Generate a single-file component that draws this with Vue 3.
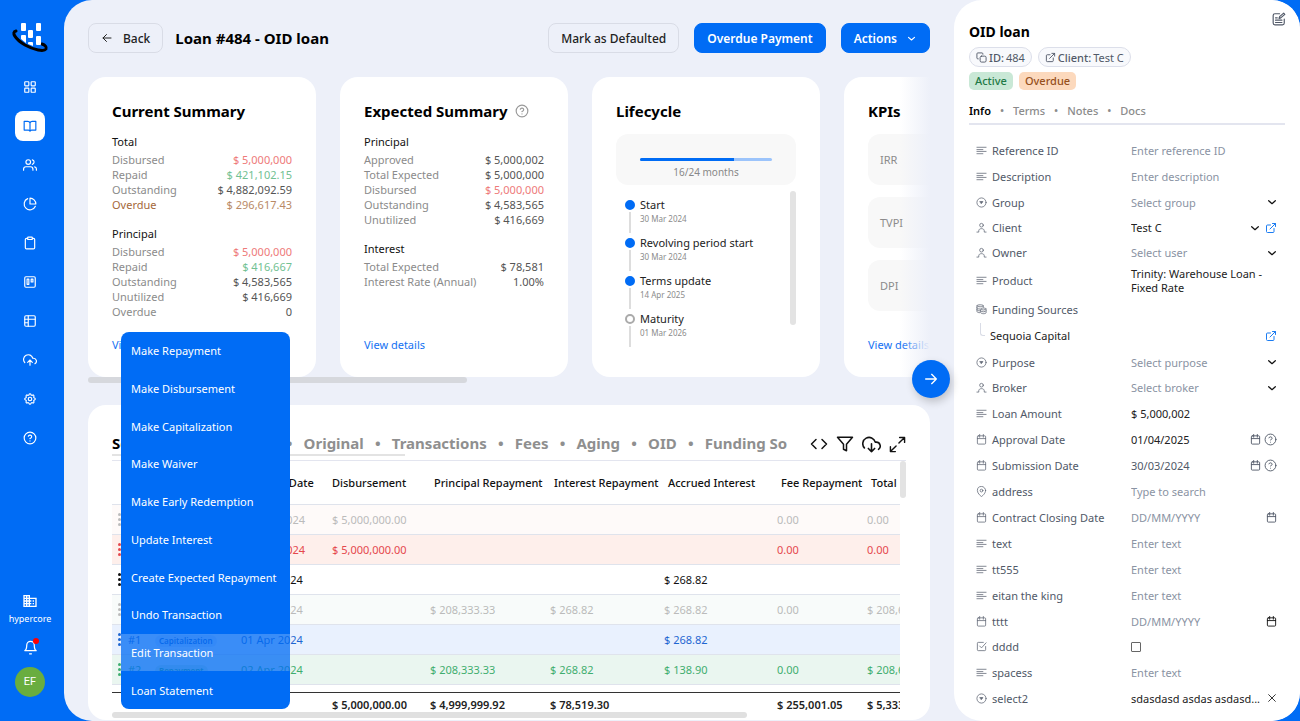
<script setup>
import { h, ref } from 'vue'

const paths = {
  grid: '<rect x="3" y="3" width="7" height="7" rx="1"/><rect x="14" y="3" width="7" height="7" rx="1"/><rect x="14" y="14" width="7" height="7" rx="1"/><rect x="3" y="14" width="7" height="7" rx="1"/>',
  book: '<path d="M2 4h6a4 4 0 0 1 4 3v14a3 3 0 0 0-3-2H2zM22 4h-6a4 4 0 0 0-4 3v14a3 3 0 0 1 3-2h7z"/>',
  users: '<path d="M17 21v-2a4 4 0 0 0-4-4H5a4 4 0 0 0-4 4v2"/><circle cx="9" cy="7" r="4"/><path d="M23 21v-2a4 4 0 0 0-3-3.87M16 3.13a4 4 0 0 1 0 7.75"/>',
  pie: '<path d="M21.21 15.89A10 10 0 1 1 8 2.83"/><path d="M22 12A10 10 0 0 0 12 2v10z"/>',
  clipboard: '<path d="M16 4h2a2 2 0 0 1 2 2v14a2 2 0 0 1-2 2H6a2 2 0 0 1-2-2V6a2 2 0 0 1 2-2h2"/><rect x="8" y="2" width="8" height="4" rx="1"/>',
  board: '<rect x="3" y="3" width="18" height="18" rx="2"/><path d="M7 7h3v9H7zM14 7h3v5h-3z"/>',
  table: '<rect x="3" y="3" width="18" height="18" rx="2"/><path d="M3 9h18M9 3v18M3 15h6"/>',
  upload: '<path d="M16 16l-4-4-4 4M12 12v9"/><path d="M20.39 18.39A5 5 0 0 0 18 9h-1.26A8 8 0 1 0 3 16.3"/>',
  download: '<path d="M8 17l4 4 4-4M12 11v10"/><path d="M20.88 18.09A5 5 0 0 0 18 9h-1.26A8 8 0 1 0 3 16.29"/>',
  cog: '<circle cx="12" cy="12" r="3"/><path d="M10.325 4.317c.426-1.756 2.924-1.756 3.350 0a1.724 1.724 0 0 0 2.573 1.066c1.543-.940 3.310 .826 2.370 2.370a1.724 1.724 0 0 0 1.065 2.572c1.756 .426 1.756 2.924 0 3.350a1.724 1.724 0 0 0-1.066 2.573c.940 1.543-.826 3.310-2.370 2.370a1.724 1.724 0 0 0-2.572 1.065c-.426 1.756-2.924 1.756-3.350 0a1.724 1.724 0 0 0-2.573-1.066c-1.543 .940-3.310-.826-2.370-2.370a1.724 1.724 0 0 0-1.065-2.572c-1.756-.426-1.756-2.924 0-3.350a1.724 1.724 0 0 0 1.066-2.573c-.940-1.543 .826-3.310 2.370-2.370c1 .608 2.296 .070 2.572-1.065z"/>',
  help: '<circle cx="12" cy="12" r="10"/><path d="M9.090 9a3 3 0 0 1 5.830 1c0 2-3 3-3 3M12 17h.01"/>',
  building: '<path fill="currentColor" stroke="none" d="M12 7V3H2v18h20V7H12zM6 19H4v-2h2v2zm0-4H4v-2h2v2zm0-4H4V9h2v2zm0-4H4V5h2v2zm4 12H8v-2h2v2zm0-4H8v-2h2v2zm0-4H8V9h2v2zm0-4H8V5h2v2zm10 12h-8v-2h2v-2h-2v-2h2v-2h-2V9h8v10zm-2-8h-2v2h2v-2zm0 4h-2v2h2v-2z"/>',
  bell: '<path d="M18 8A6 6 0 0 0 6 8c0 7-3 9-3 9h18s-3-2-3-9M10.500 22h3"/>',
  left: '<path d="M20 12H4M11 5l-7 7 7 7"/>',
  right: '<path d="M4 12h16M13 5l7 7-7 7"/>',
  down: '<path d="M4 9l8 7 8-7"/>',
  code: '<path d="M16 18l6-6-6-6M8 6l-6 6 6 6"/>',
  filter: '<path d="M22 3H2l8 9.460V19l4 2v-8.540z"/>',
  expand: '<path d="M15 2h7v7M9 22H2v-7M22 2l-8 8M2 22l8-8"/>',
  copy: '<rect x="9" y="9" width="13" height="13" rx="3"/><path d="M5 15H4a2 2 0 0 1-2-2V4a2 2 0 0 1 2-2h9a2 2 0 0 1 2 2v1"/>',
  link: '<path d="M18 13v6a2 2 0 0 1-2 2H5a2 2 0 0 1-2-2V8a2 2 0 0 1 2-2h6M15 3h6v6M10 14L21 3"/>',
  edit: '<path d="M13 3H5a3 3 0 0 0-3 3v13a3 3 0 0 0 3 3h13a3 3 0 0 0 3-3v-7"/><path d="M12 11l1-3 7-6 2 2-7 6zM6 14h11M6 18h11M6 10h3"/>',
  lines: '<path d="M2 5h20M2 10h13M2 14h20M2 19h13"/>',
  pick: '<circle cx="12" cy="12" r="10"/><path fill="currentColor" d="M9 10h6l-3 4z"/>',
  person: '<circle cx="12" cy="7" r="4"/><path d="M2 22h4v-3c0-6 12-6 12 0v3h4"/>',
  coins: '<path d="M16 7V4c0-3-14-3-14 0v12c0 2 3 3 6 3M2 8c0 2 3 3 6 3M2 12c0 2 3 3 6 3M2 4c0 3 14 3 14 0"/><path d="M10 11c0-3 12-3 12 0v8c0 3-12 3-12 0zM10 11c0 3 12 3 12 0M10 15c0 3 12 3 12 0"/>',
  calendar: '<rect x="3" y="4" width="18" height="18" rx="2"/><path d="M16 1v6M8 1v6M3 10h18"/>',
  pin: '<path d="M21 10c0 7-9 13-9 13s-9-6-9-13a9 9 0 0 1 18 0z"/><circle cx="12" cy="10" r="3"/>',
  check: '<path d="M8 11l4 4L22 4"/><path d="M21 12v7a2 2 0 0 1-2 2H5a2 2 0 0 1-2-2V5a2 2 0 0 1 2-2h11"/>',
  close: '<path d="M4 4l16 16M20 4L4 20"/>'
}
const Icon = (p) => h('svg', {
  viewBox: '0 0 24 24', width: p.size, height: p.size, fill: 'none', stroke: 'currentColor',
  'stroke-width': p.weight, 'stroke-linecap': 'round', 'stroke-linejoin': 'round',
  'aria-hidden': 'true', innerHTML: paths[p.name]
})
Icon.props = { name: String, size: { default: 14 }, weight: { default: 2 } }

const nav = ['grid', 'book', 'users', 'pie', 'clipboard', 'board', 'table', 'upload', 'cog', 'help']
const navNames = ['Dashboard', 'Loans', 'Clients', 'Reports', 'Tasks', 'Board', 'Tables', 'Upload', 'Settings', 'Help']

const current = [
  { title: 'Total', rows: [['Disbursed', '$ 5,000,000', 'red'], ['Repaid', '$ 421,102.15', 'green'], ['Outstanding', '$ 4,882,092.59'], ['Overdue', '$ 296,617.43', 'brown']] },
  { title: 'Principal', rows: [['Disbursed', '$ 5,000,000', 'red'], ['Repaid', '$ 416,667', 'green'], ['Outstanding', '$ 4,583,565'], ['Unutilized', '$ 416,669'], ['Overdue', '0']] }
]
const expected = [
  { title: 'Principal', rows: [['Approved', '$ 5,000,002'], ['Total Expected', '$ 5,000,000'], ['Disbursed', '$ 5,000,000', 'red'], ['Outstanding', '$ 4,583,565'], ['Unutilized', '$ 416,669']] },
  { title: 'Interest', rows: [['Total Expected', '$ 78,581'], ['Interest Rate (Annual)', '1.00%']] }
]
const summaries = [
  { title: 'Current Summary', groups: current },
  { title: 'Expected Summary', groups: expected, help: true }
]
const progress = { done: 16, total: 24, percent: 71 }
const events = [
  { name: 'Start', date: '30 Mar 2024', done: true },
  { name: 'Revolving period start', date: '30 Mar 2024', done: true },
  { name: 'Terms update', date: '14 Apr 2025', done: true },
  { name: 'Maturity', date: '01 Mar 2026', done: false }
]
const kpis = ['IRR', 'TVPI', 'DPI']
const tabs = ['Schedule', 'Expected', 'Original', 'Transactions', 'Fees', 'Aging', 'OID', 'Funding So']

const columns = ['', '#', 'Type', 'Effective Date', 'Disbursement', 'Principal Repayment', 'Interest Repayment', 'Accrued Interest', 'Fee Repayment', 'Total']
const rows = [
  { tone: 'pale-red', cells: ['', '', '30 Mar 2024', '$ 5,000,000.00', '', '', '', '0.00', '0.00'] },
  { tone: 'red', cells: ['', '', '30 Mar 2024', '$ 5,000,000.00', '', '', '', '0.00', '0.00'] },
  { tone: 'plain', cells: ['', '', '01 Apr 2024', '', '', '', '$ 268.82', '', ''] },
  { tone: 'pale-green', cells: ['', '', '01 Apr 2024', '', '$ 208,333.33', '$ 268.82', '$ 268.82', '0.00', '$ 208,602.15'] },
  { tone: 'blue', cells: ['#1', 'Capitalization', '01 Apr 2024', '', '', '', '$ 268.82', '', ''] },
  { tone: 'green', cells: ['#2', 'Repayment', '02 Apr 2024', '', '$ 208,333.33', '$ 268.82', '$ 138.90', '0.00', '$ 208,602.15'] }
]
const totals = ['', '', '', '', '$ 5,000,000.00', '$ 4,999,999.92', '$ 78,519.30', '', '$ 255,001.05', '$ 5,333,520.27']

const actions = ['Make Repayment', 'Make Disbursement', 'Make Capitalization', 'Make Waiver', 'Make Early Redemption', 'Update Interest', 'Create Expected Repayment', 'Undo Transaction', 'Edit Transaction', 'Loan Statement']
const hovered = ref('Edit Transaction')

const fields = [
  { label: 'Reference ID', icon: 'lines', kind: 'text', hint: 'Enter reference ID' },
  { label: 'Description', icon: 'lines', kind: 'text', hint: 'Enter description' },
  { label: 'Group', icon: 'pick', kind: 'select', hint: 'Select group' },
  { label: 'Client', icon: 'person', kind: 'select', value: 'Test C', link: true },
  { label: 'Owner', icon: 'person', kind: 'select', hint: 'Select user' },
  { label: 'Product', icon: 'lines', kind: 'note', value: 'Trinity: Warehouse Loan - Fixed Rate' },
  { label: 'Funding Sources', icon: 'coins', kind: 'none' },
  { label: 'Sequoia Capital', kind: 'source' },
  { label: 'Purpose', icon: 'pick', kind: 'select', hint: 'Select purpose' },
  { label: 'Broker', icon: 'person', kind: 'select', hint: 'Select broker' },
  { label: 'Loan Amount', icon: 'lines', kind: 'text', value: '$ 5,000,002' },
  { label: 'Approval Date', icon: 'calendar', kind: 'date', value: '01/04/2025', help: true },
  { label: 'Submission Date', icon: 'calendar', kind: 'date', value: '30/03/2024', help: true, soft: true },
  { label: 'address', icon: 'pin', kind: 'text', hint: 'Type to search' },
  { label: 'Contract Closing Date', icon: 'calendar', kind: 'date', hint: 'DD/MM/YYYY' },
  { label: 'text', icon: 'lines', kind: 'text', hint: 'Enter text' },
  { label: 'tt555', icon: 'lines', kind: 'text', hint: 'Enter text' },
  { label: 'eitan the king', icon: 'lines', kind: 'text', hint: 'Enter text' },
  { label: 'tttt', icon: 'calendar', kind: 'date', hint: 'DD/MM/YYYY', dark: true },
  { label: 'dddd', icon: 'check', kind: 'check' },
  { label: 'spacess', icon: 'lines', kind: 'text', hint: 'Enter text' },
  { label: 'select2', icon: 'pick', kind: 'select', value: 'sdasdasd asdas asdasd...', clear: true }
]
</script>

<template>
  <div class="app">
    <nav class="sidebar" aria-label="Main">
      <svg class="logo" viewBox="0 0 38 32" width="38" height="32" aria-label="hypercore">
        <path d="M5 9C0 10 4 17 14 23c9 5 19 7 21 4 1-2-1-4-4-5" fill="none" stroke="#000" stroke-width="3" stroke-linecap="round" />
        <g fill="#fff">
          <rect x="10" y="1" width="5" height="8" rx="1" />
          <rect x="25" y="1" width="5" height="8" rx="1" />
          <rect x="17" y="8" width="5" height="8" rx="1" />
          <path d="M10 14a1 1 0 0 1 1-1h3a1 1 0 0 1 1 1v7l-5-4z" />
          <rect x="25" y="14" width="5" height="9" rx="1" />
          <path d="M17 21a1 1 0 0 1 1-1h3a1 1 0 0 1 1 1v3l-5-2z" />
        </g>
      </svg>
      <a v-for="(n, i) in nav" :key="n" href="#" class="nav-item" :class="{ active: n === 'book' }" :aria-label="navNames[i]"><Icon :name="n" /></a>
      <a href="#" class="org"><Icon name="building" :size="16" />hypercore</a>
      <button class="bell" aria-label="Notifications"><Icon name="bell" :size="15" /><i /></button>
      <button class="avatar">EF</button>
    </nav>

    <div class="workspace">
      <main class="main">
        <header class="topbar">
          <button class="btn back"><Icon name="left" :size="12" />Back</button>
          <h1>Loan #484 - OID loan</h1>
          <button class="btn">Mark as Defaulted</button>
          <button class="btn primary">Overdue Payment</button>
          <button class="btn primary">Actions<Icon class="caret" name="down" :size="9" :weight="3" /></button>
        </header>

        <section class="carousel">
          <div class="track">
            <article v-for="s in summaries" :key="s.title" class="card">
              <h2>{{ s.title }}<Icon v-if="s.help" class="hint" name="help" /></h2>
              <template v-for="g in s.groups" :key="g.title">
                <h3>{{ g.title }}</h3>
                <dl>
                  <div v-for="r in g.rows" :key="r[0]" :class="r[2]"><dt>{{ r[0] }}</dt><dd>{{ r[1] }}</dd></div>
                </dl>
              </template>
              <a href="#" class="details">View details</a>
            </article>

            <article class="card">
              <h2>Lifecycle</h2>
              <div class="progress">
                <div class="bar"><div :style="{ width: progress.percent + '%' }" /></div>
                <span>{{ progress.done }}/{{ progress.total }} months</span>
              </div>
              <div class="timeline">
                <ol>
                  <li v-for="e in events" :key="e.name" :class="{ done: e.done }">
                    <i class="dot" />
                    <strong>{{ e.name }}</strong>
                    <small>{{ e.date }}</small>
                  </li>
                </ol>
                <div class="thumb-y" />
              </div>
            </article>

            <article class="card">
              <h2>KPIs</h2>
              <div class="kpis"><div v-for="k in kpis" :key="k">{{ k }}</div></div>
              <a href="#" class="details">View details</a>
            </article>
          </div>
          <div class="thumb-x" />
          <div class="fade" />
          <button class="next" aria-label="Next cards"><Icon name="right" :size="16" /></button>
        </section>

        <section class="ledger">
          <div class="ledger-head">
            <div class="tabs">
              <button v-for="(t, i) in tabs" :key="t" :class="{ on: i === 0 }">{{ t }}</button>
            </div>
            <div class="tools">
              <button aria-label="Columns"><Icon name="code" :size="18" /></button>
              <button aria-label="Filter"><Icon name="filter" :size="18" /></button>
              <button aria-label="Download"><Icon name="download" :size="19" /></button>
              <button aria-label="Full screen"><Icon name="expand" :size="17" /></button>
            </div>
          </div>
          <div class="table-wrap">
            <div class="table-clip">
              <table>
                <colgroup><col v-for="(c, i) in columns" :key="i" :class="'c' + i"></colgroup>
                <thead><tr><th v-for="c in columns" :key="c">{{ c }}</th></tr></thead>
                <tbody>
                  <tr v-for="(r, i) in rows" :key="i" :class="r.tone">
                    <td><span class="dots"><i /><i /><i /></span></td>
                    <td v-for="(c, j) in r.cells" :key="j"><span v-if="j === 1 && c" class="badge">{{ c }}</span><template v-else>{{ c }}</template></td>
                  </tr>
                </tbody>
                <tfoot>
                  <tr class="gap"><td colspan="10" /></tr>
                  <tr><td v-for="(c, i) in totals" :key="i">{{ c }}</td></tr>
                </tfoot>
              </table>
            </div>
            <div class="thumb-table" />
          </div>
          <div class="thumb-bottom" />
        </section>
      </main>

      <aside class="panel">
        <button class="edit" aria-label="Edit layout"><Icon name="edit" /></button>
        <h2>OID loan</h2>
        <div class="chips">
          <button class="chip"><Icon name="copy" :size="11" /><b>ID:</b> 484</button>
          <a href="#" class="chip"><Icon name="link" :size="11" /><b>Client:</b> Test C</a>
        </div>
        <div class="states"><span class="active">Active</span><span class="overdue">Overdue</span></div>
        <div class="ptabs"><button class="on">Info</button><button>Terms</button><button>Notes</button><button>Docs</button></div>
        <form>
          <div v-for="(f, i) in fields" :key="f.label" class="field" :class="[f.kind, { person: f.icon === 'person' }]">
            <template v-if="f.kind === 'source'">
              <i class="branch" /><span class="source-name">{{ f.label }}</span>
              <a href="#" class="open" aria-label="Open Sequoia Capital"><Icon name="link" :size="12" /></a>
            </template>
            <template v-else>
              <component :is="f.kind === 'note' || f.kind === 'none' ? 'span' : 'label'" class="label" :for="f.kind === 'note' || f.kind === 'none' ? null : 'f' + i"><Icon :name="f.icon" :size="11" :weight="1.7" />{{ f.label }}</component>
              <input v-if="f.kind === 'text' || f.kind === 'date'" :id="'f' + i" type="text" :placeholder="f.hint" :value="f.value" :class="{ soft: f.soft }">
              <select v-if="f.kind === 'select'" :id="'f' + i" :class="{ empty: f.hint }"><option>{{ f.value || f.hint }}</option></select>
              <input v-if="f.kind === 'check'" :id="'f' + i" type="checkbox">
              <p v-if="f.kind === 'note'">{{ f.value }}</p>
              <span class="tail">
                <Icon v-if="f.kind === 'select' && !f.clear" name="down" :size="10" :weight="3" />
                <button v-if="f.clear" type="button" aria-label="Clear"><Icon name="close" :size="10" /></button>
                <button v-if="f.kind === 'date'" type="button" aria-label="Pick date" :class="{ grey: !f.dark }"><Icon name="calendar" :size="11" /></button>
                <Icon v-if="f.help" class="grey" name="help" :size="13" :weight="1.7" />
                <a v-if="f.link" href="#" class="open" aria-label="Open client"><Icon name="link" :size="12" /></a>
              </span>
            </template>
          </div>
        </form>
      </aside>
    </div>

    <div class="menu" role="menu">
      <button v-for="a in actions" :key="a" role="menuitem" :class="{ hover: a === hovered }" @mouseenter="hovered = a">{{ a }}</button>
    </div>
  </div>
</template>

<style>
body { margin: 0; background: #006cf5; }
</style>

<style scoped>
* { box-sizing: border-box; }
button, input, select { font: inherit; color: inherit; border: 0; background: none; padding: 0; margin: 0; }
button { cursor: pointer; }
a { color: inherit; text-decoration: none; }
svg { display: block; flex: none; }
h1, h2, h3, p, dl, dd, ol { margin: 0; padding: 0; }

.app { position: relative; display: flex; height: 100vh; overflow: hidden; background: #006cf5; font: 11px/15px "Noto Sans", "Open Sans", sans-serif; color: #111; }

.sidebar { width: 64px; flex: none; padding: 22px 4px 24px 0; display: flex; flex-direction: column; align-items: center; gap: 9px; color: #fff; }
.logo { margin-bottom: 9px; }
.nav-item { width: 30px; height: 30px; border-radius: 8px; display: grid; place-items: center; }
.nav-item.active { background: #fff; color: #006cf5; }
.org { margin-top: auto; display: flex; flex-direction: column; align-items: center; gap: 2px; font-size: 9px; line-height: 16px; }
.bell { position: relative; margin-top: 4px; }
.bell i { position: absolute; top: -2px; right: -1px; width: 6px; height: 6px; border-radius: 50%; background: #f00; }
.avatar { width: 30px; height: 30px; border-radius: 50%; background: #69ad3f; font: 11px/30px Roboto, sans-serif; margin-top: 3px; flex: none; }

.workspace { flex: 1; min-width: 0; display: flex; background: #edf0f9; border-radius: 28px; overflow: hidden; }
.main { flex: 1; min-width: 0; padding: 23px 24px 0; display: flex; flex-direction: column; }

.topbar { display: flex; align-items: center; gap: 15px; margin-bottom: 24px; }
.topbar h1 { flex: 1; margin-left: -3px; font-size: 15px; line-height: 22px; color: #000; }
.btn { height: 30px; padding: 0 12px; border: 1px solid #d9dce6; border-radius: 8px; font-size: 12px; font-weight: 500; display: flex; align-items: center; white-space: nowrap; color: #222; }
.back { gap: 10px; }
.primary { background: #006cf5; border-color: #006cf5; color: #fff; font-weight: 600; }
.caret { margin: 0 1px 0 10px; }

.carousel { position: relative; margin-bottom: 22px; }
.track { display: flex; gap: 24px; overflow: hidden; }
.card { width: 228px; height: 300px; flex: none; padding: 24px; border-radius: 18px; background: #fff; display: flex; flex-direction: column; }
.card h2 { font-size: 15px; line-height: 20px; margin-bottom: 2px; display: flex; align-items: center; gap: 7px; color: #000; }
.hint { color: #999; }
.card h3 { font-size: 11px; font-weight: 400; line-height: 16px; margin: 11px 0 2px; }
.card dl + h3 { margin-top: 14px; }
dl div { display: flex; justify-content: space-between; }
dt { color: #8b8b8b; }
dd { color: #555; }
.red dd { color: #ee7a7a; }
.green dd { color: #72c193; }
.brown dt { color: #a5673a; }
.brown dd { color: #b98a66; }
.details { margin-top: auto; line-height: 16px; color: #1471f2; }
.progress { margin-top: 11px; height: 51px; flex: none; padding: 24px 24px 0; border-radius: 12px; background: #f8f8f8; text-align: center; color: #888; font-size: 10px; line-height: 22px; }
.bar { height: 3px; border-radius: 2px; background: #9cc4fb; overflow: hidden; }
.bar div { height: 100%; background: #006cf5; }
.timeline { display: flex; margin-top: 6px; height: 160px; flex: none; overflow: hidden; justify-content: space-between; }
.timeline ol { list-style: none; padding: 6px 0 0 9px; }
.timeline li { position: relative; height: 38px; padding-left: 15px; }
.timeline strong { display: block; font-weight: 400; font-size: 11px; line-height: 16px; color: #222; }
.timeline small { display: block; font-size: 8px; line-height: 11px; color: #8b8b8b; }
.timeline li::before { content: ""; position: absolute; left: 4px; top: 15px; width: 2px; height: 21px; background: #ddd; }
.dot { position: absolute; left: 0; top: 3px; width: 10px; height: 10px; border-radius: 50%; border: 2px solid #aaa; background: #fff; }
.done .dot { background: #006cf5; border-color: #006cf5; }
.thumb-y { width: 6px; height: 134px; border-radius: 3px; background: #e3e3e3; }
.kpis { display: grid; gap: 12px; margin-top: 11px; }
.kpis div { height: 51px; padding: 0 12px; border-radius: 12px; background: #f8f8f8; line-height: 51px; color: #8b8b8b; }
.thumb-x { width: 45%; height: 6px; border-radius: 3px; background: #d6d8dd; }
.fade { position: absolute; top: 0; right: 0; width: 30px; height: 300px; background: linear-gradient(90deg, #edf0f900, #edf0f9); }
.next { position: absolute; right: -20px; top: 283px; width: 38px; height: 38px; border-radius: 50%; background: #006cf5; color: #fff; display: grid; place-items: center; box-shadow: 2px 4px 8px #0003; z-index: 2; }

.ledger { flex: 1; min-height: 0; padding: 26px 24px 2px; border-radius: 18px; background: #fff; display: flex; flex-direction: column; margin-bottom: 1px; }
.ledger-head { display: flex; align-items: flex-start; height: 30px; flex: none; border-bottom: 1px solid #e3e5ef; }
.tabs { flex: 1; min-width: 0; overflow: hidden; display: flex; margin-right: 16px; position: relative; height: 26px; }
.tabs::after { content: ""; position: absolute; left: 0; bottom: 1px; width: 43%; height: 2px; background: #e3e3e3; }
.tabs button { font-size: 15px; line-height: 24px; height: 24px; font-weight: 700; color: #8f8f8f; white-space: nowrap; flex: none; }
.tabs button + button::before { content: "•"; display: inline-block; width: 28px; text-align: center; }
.tabs .on { color: #000; }
.tools { display: flex; align-items: center; gap: 8px; height: 26px; }
.table-wrap { flex: 1; min-height: 0; display: flex; }
.table-clip { flex: 1; min-width: 0; overflow: hidden; }
.thumb-table { width: 6px; height: 37px; border-radius: 3px; background: #e3e3e3; flex: none; }
.thumb-bottom { width: 80%; height: 6px; border-radius: 3px; background: #e0e0e0; flex: none; }
table { width: 872px; table-layout: fixed; border-collapse: collapse; }
.c0 { width: 12px; } .c1 { width: 27px; } .c2 { width: 86px; } .c3 { width: 91px; } .c4 { width: 98px; }
.c5 { width: 120px; } .c6 { width: 114px; } .c7 { width: 113px; } .c8 { width: 90px; }
th { height: 43px; padding: 0 0 0 8px; font-weight: 500; text-align: left; white-space: nowrap; color: #111; }
th:nth-child(-n+5) { padding-left: 4px; }
td { height: 30px; padding: 0 0 0 4px; border-top: 1px solid #dfe3ec; white-space: nowrap; }
.dots { display: grid; gap: 2px; width: 3px; margin-left: 2px; }
.dots i { width: 3px; height: 3px; border-radius: 50%; background: currentColor; }
.badge { display: inline-block; padding: 0 4px; border-radius: 6px; font-size: 8px; line-height: 12px; font-weight: 600; background: #d3e3fc; }
.pale-red { background: #fefaf9; color: #bbb; }
tr.red { background: #feefeb; color: #e5484d; }
.pale-green { background: #f8fbfa; color: #bbb; }
.blue { background: #e9f1fe; color: #1f66d1; }
tr.green { background: #eaf6f0; color: #3fae6f; }
.green .badge { background: #cfe9da; }
.gap td { height: 8px; border-bottom: 1px solid #333; }
tfoot tr:last-child td { height: 24px; border: 0; font-weight: 600; color: #222; }

.menu { position: absolute; left: 121px; top: 332px; bottom: 12px; width: 169px; display: flex; flex-direction: column; border-radius: 8px; overflow: hidden; z-index: 3; }
.menu button { flex: 1; padding: 0 10px; text-align: left; color: #fff; background: #006cf5; white-space: nowrap; }
.menu .hover { background: #006cf5c0; }

.panel { position: relative; width: 346px; flex: none; padding: 22px 15px 0; background: #fff; border-radius: 28px; color: #515968; }
.edit { position: absolute; right: 14px; top: 12px; }
.panel h2 { font-size: 14px; line-height: 20px; color: #000; }
.chips { display: flex; gap: 6px; margin-top: 5px; }
.chip { height: 20px; padding: 0 6px; display: flex; align-items: center; gap: 2px; border: 1px solid #dcdfea; border-radius: 10px; background: #f8f9fc; }
.chip b { font-weight: 500; }
.states { display: flex; gap: 6px; margin-top: 5px; }
.states span { height: 18px; padding: 0 6px; line-height: 18px; border-radius: 5px; font-weight: 500; }
.states .active { background: #c9e8d6; color: #1f7a46; }
.states .overdue { background: #fcd9bd; color: #96501c; }
.ptabs { display: flex; margin: 9px 0 12px; height: 26px; border-bottom: 2px solid #e3e5ef; line-height: 24px; color: #8b8b8b; font-weight: 500; }
.ptabs button { line-height: 24px; }
.ptabs button + button::before { content: "•"; display: inline-block; width: 22px; text-align: center; }
.ptabs .on { color: #000; font-weight: 600; }
.field { display: flex; align-items: center; height: 26px; padding: 0 8px 0 7px; }
.field.person, .field.check { height: 25px; }
.field.note { height: 31px; }
.field.source { height: 27px; }
.label { width: 155px; flex: none; display: flex; align-items: center; gap: 5px; }
.label svg { opacity: .9; }
.field input[type="text"], select { flex: 1; min-width: 0; width: 0; height: 20px; appearance: none; color: #222; }
.field input::placeholder, select.empty { color: #8a93a3; opacity: 1; }
.field input.soft { color: #515968; }
.field p { line-height: 14px; color: #222; }
.tail { display: flex; align-items: center; gap: 3px; color: #111; flex: none; }
.grey { color: #515968; }
.open { color: #1b7cf2; }
.tail .open { margin-left: 2px; }
input[type="checkbox"] { appearance: none; width: 10px; height: 10px; border: 1px solid #666; border-radius: 1px; }
.branch { width: 5px; height: 13px; margin: -12px 5px 0 4px; border: solid #d9dce6; border-width: 0 0 1px 1px; border-radius: 0 0 0 3px; }
.source-name { flex: 1; color: #222; }
</style>
